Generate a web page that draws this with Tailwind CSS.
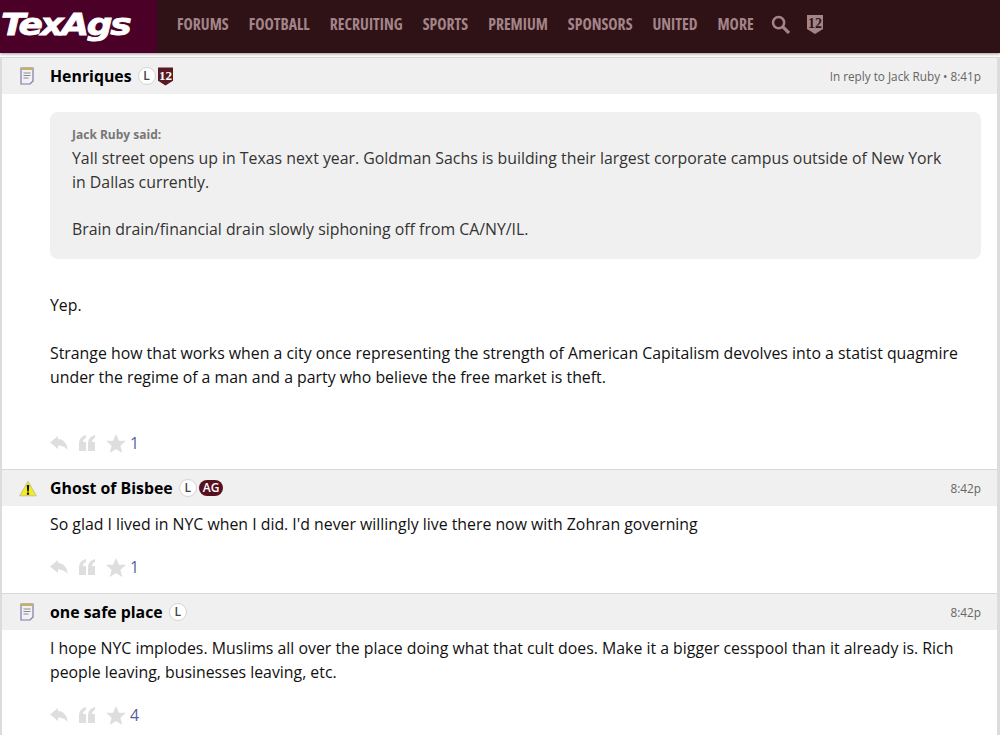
<!DOCTYPE html>
<html lang="en">
<head>
    <meta charset="UTF-8">
    <meta name="viewport" content="width=device-width, initial-scale=1.0">
    <title>TexAgs</title>
    <script src="https://cdn.jsdelivr.net/npm/@tailwindcss/browser@4"></script>
</head>
<body class="bg-white font-['Open_Sans',sans-serif] text-[15.85px] leading-6 text-black overflow-hidden h-[735px]">
    <!-- top nav -->
    <header class="flex h-[53px] bg-[#2f1216] shadow-[0_1px_3px_rgba(0,0,0,0.4)] relative z-10">
        <div class="w-[157px] bg-[#4b0028] flex items-center pl-[1px] pb-[3px] overflow-hidden">
            <span class="font-['DejaVu_Sans',sans-serif] font-bold italic text-[30px] leading-none text-white tracking-[-2px] [-webkit-text-stroke:0.8px_white] origin-left scale-x-[1.2]">TexAgs</span>
        </div>
        <nav class="flex items-center pl-5 gap-5 text-[#a38488] font-bold text-[15.7px] pb-[5px] [font-stretch:75%]">
            <a>FORUMS</a>
            <a>FOOTBALL</a>
            <a>RECRUITING</a>
            <a>SPORTS</a>
            <a>PREMIUM</a>
            <a>SPONSORS</a>
            <a>UNITED</a>
            <a>MORE</a>
            <svg class="-ml-[3px] w-[19px] h-[19px]" viewBox="0 0 18 18" fill="none" stroke="#a38488"><circle cx="7.2" cy="7.2" r="5.3" stroke-width="2.4"/><path d="M11 11l6 6" stroke-width="3"/></svg>
            <svg class="-ml-[3px] w-4 h-[19px]" viewBox="0 0 16 19"><path d="M0 0h16v14l-8 5-8-5z" fill="#a38488"/><text x="8" y="13" text-anchor="middle" font-family="Liberation Serif" font-weight="700" font-size="14" fill="#2f1216">12</text></svg>
        </nav>
    </header>

    <main class="border-l-2 border-r-[3px] border-[#dcdcdc] mt-[4px] h-[678px]">
        <!-- post 1 -->
        <article class="border-t border-[#d8d8d8]">
            <div class="flex items-center h-9 bg-[#f0f0f0] pr-[16px]">
                <span class="w-[48px] flex justify-center pl-[2px]">
                    <svg class="w-[14px] h-[18px]" viewBox="0 0 14 18"><path d="M1 1h12v13l-3 3H1z" fill="#f1f1f6" stroke="#7f7ba8" stroke-width="1.2"/><path d="M1 .5h12v2.500H1z" fill="#c4b06a"/><path d="M3.500 6h7M3.500 8.500h7M3.500 11h5" stroke="#8a8a8a"/></svg>
                </span>
                <b class="font-bold text-[15.85px]">Henriques</b>
                <span class="ml-[6px] w-[18px] h-[18px] rounded-full bg-white border border-[#d4d4d4] text-[12px] font-semibold text-[#444] flex items-center justify-center">L</span>
                <svg class="ml-[2px] w-[15px] h-[19px]" viewBox="0 0 16 19"><path d="M0 0h16v14l-8 5-8-5z" fill="#5a1a22"/><text x="8" y="13" text-anchor="middle" font-family="Liberation Serif" font-weight="700" font-size="14" fill="#fff">12</text></svg>
                <span class="ml-auto text-[11.75px] font-medium text-[#666]">In reply to Jack Ruby • 8:41p</span>
            </div>
            <div class="px-[48px] pr-[16px] pt-[18px]">
                <div class="bg-[#f0f0f0] rounded-lg px-[22px] pt-[11px] pb-[18px] text-[#333]">
                    <div class="text-[12px] font-bold text-[#777] leading-[24px]">Jack Ruby said:</div>
                    <p class="leading-[23.5px]">Yall street opens up in Texas next year. Goldman Sachs is building their largest corporate campus outside of New York in Dallas currently.<br><br>Brain drain/financial drain slowly siphoning off from CA/NY/IL.</p>
                </div>
                <p class="mt-[34px] text-[#111]">Yep.<br><br>Strange how that works when a city once representing the strength of American Capitalism devolves into a statist quagmire under the regime of a man and a party who believe the free market is theft.</p>
            </div>
            <div class="flex items-center gap-[11px] pl-[48px] mt-[42px] h-6 text-[#55609a]">
                <svg class="w-[18px] h-4" viewBox="0 0 18 16" fill="#dedede"><path d="M8 1L0 7.500 8 14v-3.500c4 0 7 1 9.500 4.500 0-6-3.500-10.500-9.500-11z"/></svg>
                <svg class="w-4 h-4" viewBox="0 0 16 16" fill="#dedede"><path d="M0 16V8q0-6 7-8v3Q4 4 4 7h3v9zM9 16V8q0-6 7-8v3q-3 1-3 4h3v9z"/></svg>
                <span class="flex items-center gap-1"><svg class="w-5 h-[19px]" viewBox="0 0 18 17" fill="#dedede"><path d="M9 0l2.700 6H18l-5 4.500L14.600 17 9 13.500 3.400 17 5 10.500 0 6h6.300z"/></svg>1</span>
            </div>
        </article>

        <!-- post 2 -->
        <article class="border-t border-[#d8d8d8] mt-[14px]">
            <div class="flex items-center h-9 bg-[#f0f0f0] pr-[16px]">
                <span class="w-[48px] flex justify-center pl-[3px]">
                    <svg class="w-[18px] h-[17px]" viewBox="0 0 18 16"><path d="M9 .8L17.300 15.300H.7z" fill="#f5ec1e" stroke="#c4c090" stroke-linejoin="round"/><path d="M7.800 4.500h2.400l-.4 6.500H8.200zM7.900 12h2.200v2.200H7.900z" fill="#111"/></svg>
                </span>
                <b class="font-bold text-[15.85px]">Ghost of Bisbee</b>
                <span class="ml-[6px] w-[18px] h-[18px] rounded-full bg-white border border-[#d4d4d4] text-[12px] font-semibold text-[#444] flex items-center justify-center">L</span>
                <span class="ml-[2px] h-4 px-[4px] rounded-full bg-[#57101f] text-white text-[12px] font-semibold leading-4">AG</span>
                <span class="ml-auto text-[11.75px] font-medium text-[#666]">8:42p</span>
            </div>
            <p class="pl-[48px] pr-[16px] pt-[6px] text-[#111]">So glad I lived in NYC when I did. I'd never willingly live there now with Zohran governing</p>
            <div class="flex items-center gap-[11px] pl-[48px] mt-[19px] h-6 text-[#55609a]">
                <svg class="w-[18px] h-4" viewBox="0 0 18 16" fill="#dedede"><path d="M8 1L0 7.500 8 14v-3.500c4 0 7 1 9.500 4.500 0-6-3.500-10.500-9.500-11z"/></svg>
                <svg class="w-4 h-4" viewBox="0 0 16 16" fill="#dedede"><path d="M0 16V8q0-6 7-8v3Q4 4 4 7h3v9zM9 16V8q0-6 7-8v3q-3 1-3 4h3v9z"/></svg>
                <span class="flex items-center gap-1"><svg class="w-5 h-[19px]" viewBox="0 0 18 17" fill="#dedede"><path d="M9 0l2.700 6H18l-5 4.500L14.600 17 9 13.500 3.400 17 5 10.500 0 6h6.300z"/></svg>1</span>
            </div>
        </article>

        <!-- post 3 -->
        <article class="border-t border-[#d8d8d8] mt-[14px]">
            <div class="flex items-center h-9 bg-[#f0f0f0] pr-[16px]">
                <span class="w-[48px] flex justify-center pl-[2px]">
                    <svg class="w-[14px] h-[18px]" viewBox="0 0 14 18"><path d="M1 1h12v13l-3 3H1z" fill="#f1f1f6" stroke="#7f7ba8" stroke-width="1.2"/><path d="M1 .5h12v2.500H1z" fill="#c4b06a"/><path d="M3.500 6h7M3.500 8.500h7M3.500 11h5" stroke="#8a8a8a"/></svg>
                </span>
                <b class="font-bold text-[15.85px]">one safe place</b>
                <span class="ml-[6px] w-[18px] h-[18px] rounded-full bg-white border border-[#d4d4d4] text-[12px] font-semibold text-[#444] flex items-center justify-center">L</span>
                <span class="ml-auto text-[11.75px] font-medium text-[#666]">8:42p</span>
            </div>
            <p class="pl-[48px] pr-[16px] pt-[6px] text-[#111]">I hope NYC implodes. Muslims all over the place doing what that cult does. Make it a bigger cesspool than it already is. Rich people leaving, businesses leaving, etc.</p>
            <div class="flex items-center gap-[11px] pl-[48px] mt-[19px] h-6 text-[#55609a]">
                <svg class="w-[18px] h-4" viewBox="0 0 18 16" fill="#dedede"><path d="M8 1L0 7.500 8 14v-3.500c4 0 7 1 9.500 4.500 0-6-3.500-10.500-9.500-11z"/></svg>
                <svg class="w-4 h-4" viewBox="0 0 16 16" fill="#dedede"><path d="M0 16V8q0-6 7-8v3Q4 4 4 7h3v9zM9 16V8q0-6 7-8v3q-3 1-3 4h3v9z"/></svg>
                <span class="flex items-center gap-1"><svg class="w-5 h-[19px]" viewBox="0 0 18 17" fill="#dedede"><path d="M9 0l2.700 6H18l-5 4.500L14.600 17 9 13.500 3.400 17 5 10.500 0 6h6.300z"/></svg>4</span>
            </div>
        </article>
    </main>
</body>
</html>
